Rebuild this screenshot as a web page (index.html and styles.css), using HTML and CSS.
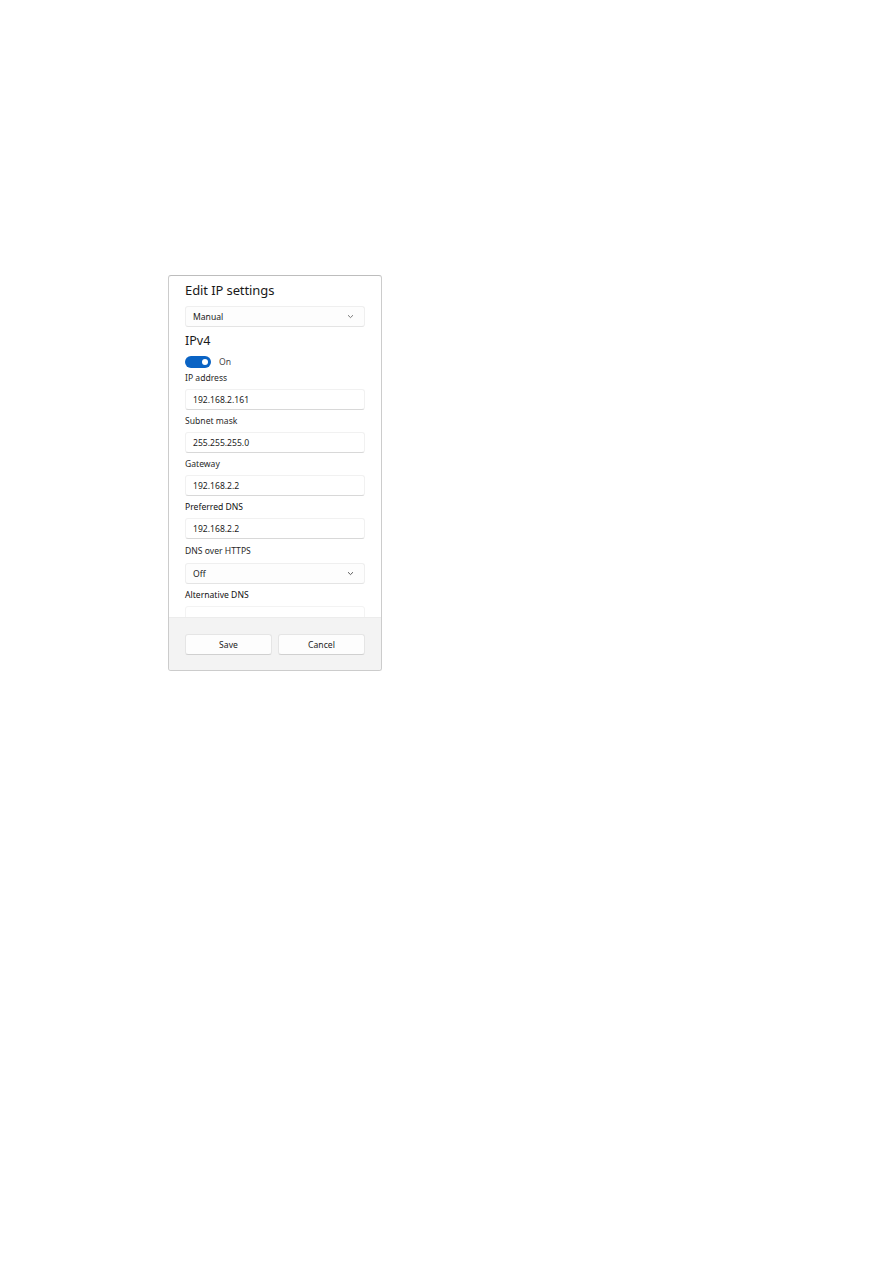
FILE: index.html
```html
<!DOCTYPE html>
<html lang="en">
<head>
<meta charset="utf-8">
<title>Edit IP settings</title>
<link rel="stylesheet" href="styles.css">
</head>
<body>
<div class="page">
  <div class="dialog">
    <div class="dialog-body">
      <h1 class="title">Edit IP settings</h1>
      <div class="select">
        <span>Manual</span>
        <svg class="chev" width="7" height="5" viewBox="0 0 7 5"><path d="M1 1.2 L3.5 3.6 L6 1.2" fill="none" stroke="#6b6b6b" stroke-width="0.9"/></svg>
      </div>
      <h2 class="section">IPv4</h2>
      <div class="toggle-row">
        <span class="toggle"><span class="knob"></span></span>
        <span class="toggle-text">On</span>
      </div>
      <div class="field">
        <div class="label">IP address</div>
        <div class="input">192.168.2.161</div>
      </div>
      <div class="field">
        <div class="label">Subnet mask</div>
        <div class="input">255.255.255.0</div>
      </div>
      <div class="field">
        <div class="label">Gateway</div>
        <div class="input">192.168.2.2</div>
      </div>
      <div class="field">
        <div class="label strong">Preferred DNS</div>
        <div class="input">192.168.2.2</div>
      </div>
      <div class="field field-loose">
        <div class="label">DNS over HTTPS</div>
        <div class="select">
          <span>Off</span>
          <svg class="chev" width="7" height="5" viewBox="0 0 7 5"><path d="M1 1.2 L3.5 3.6 L6 1.2" fill="none" stroke="#4a4a4a" stroke-width="0.9"/></svg>
        </div>
      </div>
      <div class="field">
        <div class="label strong">Alternative DNS</div>
        <div class="input input-empty"></div>
      </div>
    </div>
    <div class="dialog-footer">
      <button class="btn">Save</button>
      <button class="btn">Cancel</button>
    </div>
  </div>
</div>
</body>
</html>
```
FILE: styles.css
```css
* { box-sizing: border-box; }

html, body {
  margin: 0;
  padding: 0;
  background: #ffffff;
  font-family: "Noto Sans", "Open Sans", sans-serif;
  color: #1b1b1b;
}

.page {
  padding: 275px 0 0 168px;
}

.dialog {
  width: 214px;
  height: 396px;
  border: 1px solid #cccccc;
  border-top-color: #bdbdbd;
  border-radius: 3px;
  background: #ffffff;
  display: flex;
  flex-direction: column;
  overflow: hidden;
}

.dialog-body {
  height: 341px;
  overflow: hidden;
  padding: 4px 16px 0 16px;
  display: flex;
  flex-direction: column;
}

.title {
  margin: 0;
  height: 20px;
  line-height: 20px;
  font-size: 13px;
  font-weight: 400;
  letter-spacing: -0.1px;
  color: #1a1a1a;
  flex: none;
}

.select {
  margin-top: 6px;
  height: 21px;
  flex: none;
  border: 1px solid #efefef;
  border-bottom-color: #e4e4e4;
  border-radius: 3px;
  background: #fdfdfd;
  display: flex;
  align-items: center;
  justify-content: space-between;
  padding: 0 10px 0 7px;
  font-size: 8.6px;
  color: #1b1b1b;
}

.chev { display: block; }

.section {
  margin: 5px 0 0 0;
  height: 18px;
  line-height: 18px;
  font-size: 12.5px;
  font-weight: 400;
  color: #1a1a1a;
  flex: none;
}

.toggle-row {
  margin-top: 6px;
  height: 12px;
  display: flex;
  align-items: center;
  gap: 8px;
  flex: none;
}

.toggle {
  width: 26px;
  height: 12px;
  border-radius: 6px;
  background: #0a63c4;
  position: relative;
  flex: none;
}

.knob {
  position: absolute;
  top: 3px;
  right: 3px;
  width: 6px;
  height: 6px;
  border-radius: 50%;
  background: #ffffff;
}

.toggle-text {
  font-size: 8.6px;
  color: #444444;
}

.field {
  margin-top: 5px;
  display: flex;
  flex-direction: column;
  flex: none;
}

.toggle-row + .field { margin-top: 4px; }

.field-loose { margin-top: 6px; }

.label {
  height: 12px;
  line-height: 12px;
  font-size: 8.6px;
  color: #2a2a2a;
}

.label.strong { color: #111111; }

.field .input,
.field .select {
  margin-top: 5px;
}

.field-loose .select { margin-top: 6px; }

.input {
  height: 21px;
  flex: none;
  border: 1px solid #f1f1f1;
  border-bottom-color: #d8d8d8;
  border-radius: 3px;
  background: #ffffff;
  display: flex;
  align-items: center;
  padding: 0 7px;
  font-size: 8.6px;
  color: #1b1b1b;
}

.input-empty {
  border-color: #f3f3f3;
}

.dialog-footer {
  flex: 1;
  background: #f3f3f3;
  border-top: 1px solid #ececec;
  padding: 16px 16px 0 16px;
  display: flex;
  gap: 6px;
  align-items: flex-start;
}

.btn {
  flex: 1;
  height: 21px;
  border: 1px solid #e5e5e5;
  border-bottom-color: #d0d0d0;
  border-radius: 3px;
  background: #fdfdfd;
  font-family: inherit;
  font-size: 8.6px;
  color: #1b1b1b;
  padding: 0;
}
```
